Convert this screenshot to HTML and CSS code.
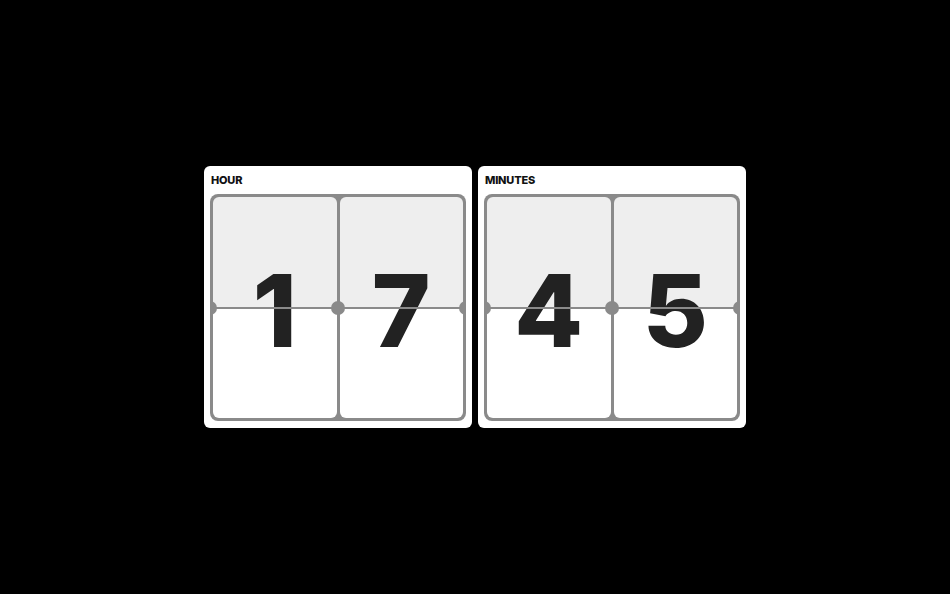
FILE: index.html
```html
<!DOCTYPE html>
<html lang="en">
<head>
<meta charset="utf-8">
<title>Flip Clock</title>
<link rel="stylesheet" href="styles.css">
</head>
<body>
<main class="clock">
  <section class="card">
    <header class="card-title">HOUR</header>
    <div class="flip">
      <div class="cell"><span class="digit">1</span></div>
      <div class="cell"><span class="digit">7</span></div>
      <span class="pin pin-left"></span>
      <span class="pin pin-mid"></span>
      <span class="pin pin-right"></span>
    </div>
  </section>
  <section class="card">
    <header class="card-title">MINUTES</header>
    <div class="flip">
      <div class="cell"><span class="digit">4</span></div>
      <div class="cell"><span class="digit">5</span></div>
      <span class="pin pin-left"></span>
      <span class="pin pin-mid"></span>
      <span class="pin pin-right"></span>
    </div>
  </section>
</main>
</body>
</html>
```
FILE: styles.css
```css
html, body {
  margin: 0;
  padding: 0;
  height: 100%;
  background: #000;
}

body {
  display: flex;
  align-items: center;
  justify-content: center;
  font-family: Inter, "Liberation Sans", Arial, sans-serif;
}

.clock {
  display: flex;
  gap: 6px;
}

.card {
  width: 268px;
  height: 262px;
  box-sizing: border-box;
  background: #fff;
  border-radius: 6px;
  padding: 0 6px 7px;
  display: flex;
  flex-direction: column;
}

.card-title {
  height: 28px;
  box-sizing: border-box;
  padding: 8px 0 0 1px;
  font-size: 11px;
  line-height: 13px;
  font-weight: 800;
  letter-spacing: -0.2px;
  color: #111;
}

.flip {
  position: relative;
  flex: 1;
  display: flex;
  gap: 3px;
  padding: 3px;
  background: #8a8a8a;
  border-radius: 8px;
  overflow: hidden;
}

.cell {
  position: relative;
  flex: 1;
  border-radius: 6px;
  overflow: hidden;
  background: linear-gradient(to bottom, #eeeeee 0, #eeeeee 50%, #ffffff 50%, #ffffff 100%);
  display: flex;
  align-items: center;
  justify-content: center;
}

.cell::after {
  content: "";
  position: absolute;
  left: 0;
  right: 0;
  top: calc(50% - 1px);
  height: 2px;
  background: #8a8a8a;
}

.digit {
  font-size: 100px;
  font-weight: 800;
  line-height: 1;
  color: #222;
  padding-top: 7px;
}

.pin {
  position: absolute;
  top: calc(50% - 7px);
  width: 14px;
  height: 14px;
  border-radius: 50%;
  background: #8a8a8a;
  z-index: 2;
}

.pin-left { left: -7px; }
.pin-mid { left: calc(50% - 7px); }
.pin-right { right: -7px; }
```
